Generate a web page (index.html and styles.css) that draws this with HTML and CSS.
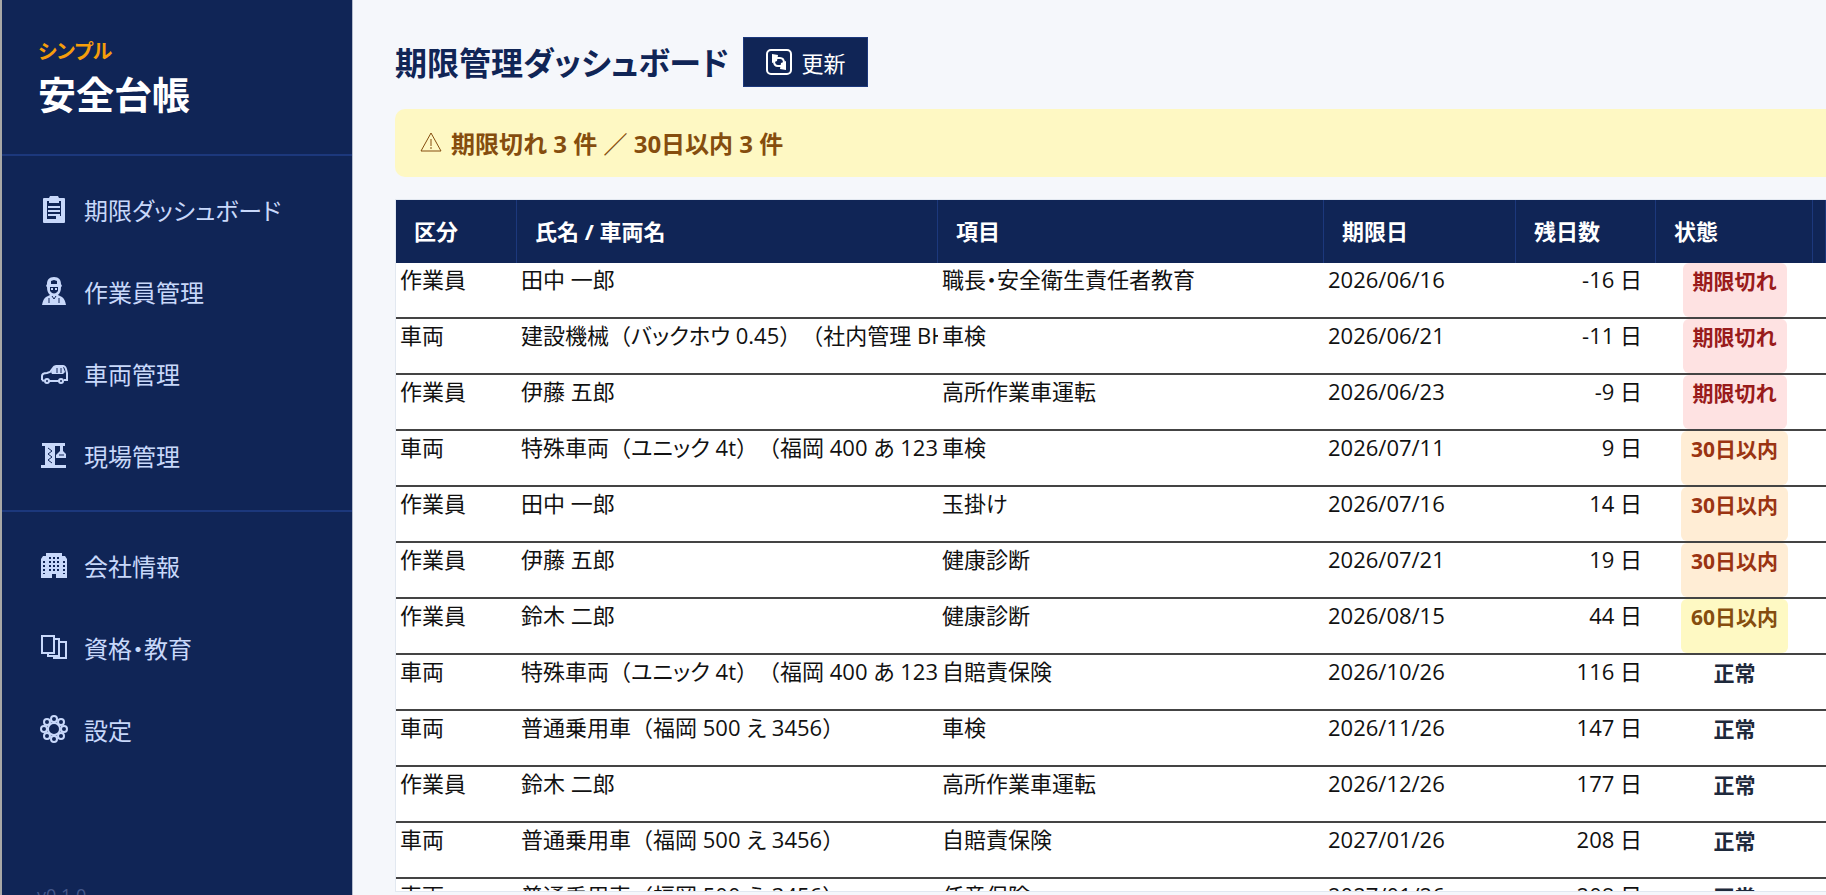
FILE: index.html
```html
<!DOCTYPE html>
<html lang="ja">
<head>
  <meta charset="UTF-8">
  <title>シンプル安全台帳</title>
  <meta name="viewport" content="width=device-width, initial-scale=1.0">
  <link rel="stylesheet" href="styles.css">
</head>

<body>
  <aside class="sidebar">
    <div class="brand">
      <span class="brand-sub">シンプル</span>
      <span class="brand-name">安全台帳</span>
    </div>
    <nav class="nav">
      <a href="#dashboard">
        <svg viewBox="0 0 28 28"><path fill-rule="evenodd" d="M4 3h5l1-2h8l1 2h5q1 0 1 1v23q0 1-1 1H4q-1 0-1-1V4q0-1 1-1zM7 6v18h9v-3h5V6h-2v2H9V6z"/><path d="M8 11h12v2H8zM8 15h12v2H8zM8 19h12v2H8z"/></svg>
        期限ダッシュボード
      </a>
      <a href="#workers">
        <svg viewBox="0 0 28 28"><path fill-rule="evenodd" d="M14 0c5 0 7 3 7 7l1 2-1 1c0 4-1 6-3 8l4 2q3 2 4 8H2q1-6 4-8l4-2c-2-2-3-4-3-8L6 9l1-2c0-4 2-7 7-7zM11 4v3h6V4l-3-1zM10 10v4q4 5 8 0v-4z"/><path d="M11 11h2v2h-2zM15 11h2v2h-2z"/><path class="cut" d="M9 21v5M19 21v5M12 19l2 3 2-3"/></svg>
        作業員管理
      </a>
      <a href="#vehicles">
        <svg viewBox="0 0 28 28"><path class="line" d="M2 21v-4q0-3 5-3l3-1 3-4q1-2 3-2h7q2 0 3 3l1 4v7h-3M8 22h11M2 21l2 1"/><path d="M11 13l3-5h9l2 5-2 2H12z"/><path class="cut" d="M17 9v5M21 9v5"/><circle class="line" cx="7" cy="22" r="2"/><circle class="line" cx="21" cy="22" r="2"/></svg>
        車両管理
      </a>
      <a href="#sites">
        <svg viewBox="0 0 28 28"><path d="M2 2h23v3h-2v5l3 3v4H16v-3l4-4V5h-5v19h11v3H1v-3h4V5H2z"/><path class="cut" d="M8 7l4 3-4 3 4 3-4 3 4 3M19 14h5"/></svg>
        現場管理
      </a>
      <hr>
      <a href="#company">
        <svg viewBox="0 0 28 28"><path fill-rule="evenodd" d="M6 2h16v3h3l2 3v19H16v-4h-4v4H1V8l2-3h3z"/><path class="dots" d="M10 6v15M14 6v15M18 6v15M4 10v13M24 10v13"/></svg>
        会社情報
      </a>
      <a href="#licenses">
        <svg viewBox="0 0 28 28"><path class="line" d="M2 3h12v17H2zM15 6h4v17H8v-3M20 9h6v16H14v-2"/></svg>
        資格・教育
      </a>
      <a href="#settings">
        <svg viewBox="0 0 28 28"><g class="line"><circle cx="14" cy="14" r="6"/><circle cx="14" cy="4" r="3"/><circle cx="21" cy="7" r="3"/><circle cx="24" cy="14" r="3"/><circle cx="21" cy="21" r="3"/><circle cx="14" cy="24" r="3"/><circle cx="7" cy="21" r="3"/><circle cx="4" cy="14" r="3"/><circle cx="7" cy="7" r="3"/></g></svg>
        設定
      </a>
    </nav>
    <footer class="version">v0.1.0</footer>
  </aside>

  <main class="content">
    <header class="page-head">
      <h1>期限管理ダッシュボード</h1>
      <button type="button" class="refresh">
        <svg viewBox="0 0 28 28"><rect class="line" x="2" y="2" width="24" height="24" rx="4"/><path class="line" d="M11 10h4q4 0 4 5M17 18h-4q-4 0-4-5"/><path d="M7 6l6 1-1 6-5 2zM21 22l-6-1 1-6 5-2z"/></svg>
        更新
      </button>
    </header>

    <p class="alert">
      <svg viewBox="0 0 24 24"><path d="M12 3L2 21h20zM12 9v7M12 17v2"/></svg>
      期限切れ 3 件 ／ 30日以内 3 件
    </p>

    <div class="grid">
      <table>
        <colgroup>
          <col class="c-kind">
          <col class="c-name">
          <col class="c-item">
          <col class="c-date">
          <col class="c-days">
          <col class="c-state">
          <col>
        </colgroup>
        <thead>
          <tr><th>区分</th><th>氏名 / 車両名</th><th>項目</th><th>期限日</th><th>残日数</th><th>状態</th><th></th></tr>
        </thead>
        <tbody>
          <tr><td>作業員</td><td>田中 一郎</td><td>職長・安全衛生責任者教育</td><td>2026/06/16</td><td class="days">-16 日</td><td class="state"><span class="badge expired">期限切れ</span></td><td></td></tr>
          <tr><td>車両</td><td>建設機械<i>（</i>バックホウ 0.45<i>）（</i>社内管理 BH-01<i>）</i></td><td>車検</td><td>2026/06/21</td><td class="days">-11 日</td><td class="state"><span class="badge expired">期限切れ</span></td><td></td></tr>
          <tr><td>作業員</td><td>伊藤 五郎</td><td>高所作業車運転</td><td>2026/06/23</td><td class="days">-9 日</td><td class="state"><span class="badge expired">期限切れ</span></td><td></td></tr>
          <tr><td>車両</td><td>特殊車両<i>（</i>ユニック 4t<i>）（</i>福岡 400 あ 1234<i>）</i></td><td>車検</td><td>2026/07/11</td><td class="days">9 日</td><td class="state"><span class="badge in30">30日以内</span></td><td></td></tr>
          <tr><td>作業員</td><td>田中 一郎</td><td>玉掛け</td><td>2026/07/16</td><td class="days">14 日</td><td class="state"><span class="badge in30">30日以内</span></td><td></td></tr>
          <tr><td>作業員</td><td>伊藤 五郎</td><td>健康診断</td><td>2026/07/21</td><td class="days">19 日</td><td class="state"><span class="badge in30">30日以内</span></td><td></td></tr>
          <tr><td>作業員</td><td>鈴木 二郎</td><td>健康診断</td><td>2026/08/15</td><td class="days">44 日</td><td class="state"><span class="badge in60">60日以内</span></td><td></td></tr>
          <tr><td>車両</td><td>特殊車両<i>（</i>ユニック 4t<i>）（</i>福岡 400 あ 1234<i>）</i></td><td>自賠責保険</td><td>2026/10/26</td><td class="days">116 日</td><td class="state"><span class="badge">正常</span></td><td></td></tr>
          <tr><td>車両</td><td>普通乗用車<i>（</i>福岡 500 え 3456<i>）</i></td><td>車検</td><td>2026/11/26</td><td class="days">147 日</td><td class="state"><span class="badge">正常</span></td><td></td></tr>
          <tr><td>作業員</td><td>鈴木 二郎</td><td>高所作業車運転</td><td>2026/12/26</td><td class="days">177 日</td><td class="state"><span class="badge">正常</span></td><td></td></tr>
          <tr><td>車両</td><td>普通乗用車<i>（</i>福岡 500 え 3456<i>）</i></td><td>自賠責保険</td><td>2027/01/26</td><td class="days">208 日</td><td class="state"><span class="badge">正常</span></td><td></td></tr>
          <tr><td>車両</td><td>普通乗用車<i>（</i>福岡 500 え 3456<i>）</i></td><td>任意保険</td><td>2027/01/26</td><td class="days">208 日</td><td class="state"><span class="badge">正常</span></td><td></td></tr>
        </tbody>
      </table>
    </div>
  </main>
</body>
</html>
```
FILE: styles.css
```css
:root {
  --navy: #102556;
  --navy-line: #1c387c;
  --nav-fg: #c8d8fa;
  --bg: #f5f7fb;
  --line: #e2e8f0;
}
* { box-sizing: border-box; }
body {
  margin: 0;
  height: 100vh;
  display: flex;
  overflow: hidden;
  background: var(--bg);
  color: #111;
  font-family: "Open Sans", "Noto Sans CJK JP", sans-serif;
  font-size: 22px;
  font-feature-settings: "palt";
}
svg {
  flex: none;
  width: 28px;
  height: 28px;
  fill: currentColor;
}
svg .line {
  fill: none;
  stroke: currentColor;
  stroke-width: 2;
}
svg .cut, svg .dots {
  fill: none;
  stroke: var(--navy);
  stroke-width: 1;
}
svg .dots {
  stroke-width: 2;
  stroke-dasharray: 2 2;
}

/* sidebar */
.sidebar {
  flex: none;
  width: 353px;
  display: flex;
  flex-direction: column;
  background: var(--navy);
  color: var(--nav-fg);
  border-left: 2px solid #a8a8a6;
  border-right: 1px solid #b4bccd;
}
.brand {
  display: flex;
  flex-direction: column;
  height: 156px;
  padding: 36px 36px 0;
  border-bottom: 2px solid var(--navy-line);
}
.brand-sub {
  color: #f59e0b;
  font-size: 20px;
  font-weight: bold;
  line-height: 32px;
}
.brand-name {
  color: #fff;
  font-size: 38px;
  font-weight: bold;
  line-height: 52px;
}
.nav {
  padding-top: 12px;
}
.nav a {
  display: flex;
  align-items: center;
  gap: 16px;
  height: 82px;
  padding: 0 38px;
  color: inherit;
  font-size: 24px;
  text-decoration: none;
}
.nav hr {
  margin: 14px 0 12px;
  border: 0;
  border-top: 2px solid var(--navy-line);
}
.version {
  flex: none;
  margin-top: auto;
  height: 14px;
  padding-left: 35px;
  color: #44578a;
  font-size: 18px;
  line-height: 28px;
}

/* main area */
.content {
  flex: 1;
  min-width: 0;
  display: flex;
  flex-direction: column;
  padding: 37px 0 3px 42px;
}
.page-head {
  display: flex;
  align-items: center;
  gap: 14px;
}
h1 {
  margin: 0;
  padding-top: 2px;
  color: var(--navy);
  font-size: 32px;
  line-height: 48px;
}
.refresh {
  display: flex;
  align-items: center;
  justify-content: center;
  gap: 8px;
  width: 125px;
  height: 50px;
  padding: 0;
  background: var(--navy);
  color: #fff;
  border: 1px solid var(--navy-line);
  font: inherit;
}
.alert {
  display: flex;
  align-items: center;
  gap: 8px;
  margin: 22px 0;
  padding: 0 24px 2px;
  height: 68px;
  background: #fef8c3;
  border-radius: 10px 0 0 10px;
  color: #854d0e;
  font-size: 24px;
  font-weight: bold;
}
.alert svg {
  width: 24px;
  height: 24px;
  fill: none;
  stroke: currentColor;
}

/* deadline table */
.grid {
  flex: 1;
  min-height: 0;
  overflow: hidden;
  background: #fff;
  border: 1px solid var(--line);
  border-right: 0;
}
table {
  width: 100%;
  table-layout: fixed;
  border-collapse: separate;
  border-spacing: 0;
}
.c-kind { width: 121px; }
.c-name { width: 421px; }
.c-item { width: 386px; }
.c-date { width: 192px; }
.c-days { width: 140px; }
.c-state { width: 157px; }
th {
  height: 63px;
  padding: 0 18px 4px;
  background: var(--navy);
  color: #fff;
  border-right: 1px solid var(--navy-line);
  text-align: left;
}
td {
  height: 56px;
  padding: 0 4px;
  border-bottom: 2px solid #444;
  line-height: 32px;
  vertical-align: top;
  white-space: nowrap;
  overflow: hidden;
}
/* brackets stay full width, kana is proportional */
td i {
  font-style: normal;
  font-feature-settings: normal;
  text-spacing-trim: space-all;
}
.days {
  padding-right: 14px;
  text-align: right;
}
.state { text-align: center; }
.badge {
  display: inline-block;
  height: 54px;
  padding: 2px 10px;
  border-radius: 6px;
  color: #1e293b;
  font-size: 21px;
  font-weight: bold;
  vertical-align: top;
}
.expired { background: #fee2e2; color: #991b1b; }
.in30 { background: #ffedd5; color: #9a3412; }
.in60 { background: #fef9c3; color: #854d0e; }
```
